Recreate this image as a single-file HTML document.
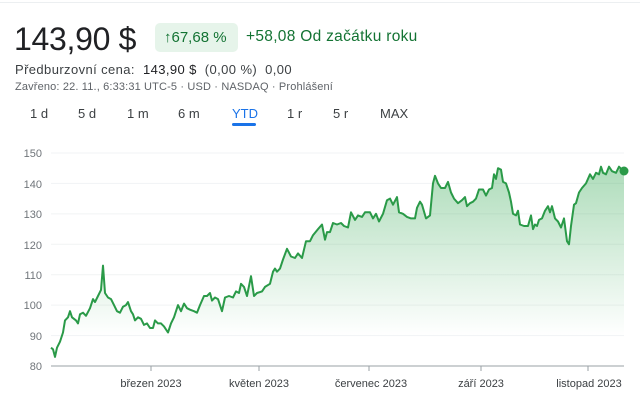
<!DOCTYPE html>
<html><head><meta charset="utf-8"><style>
body{margin:0;width:640px;height:401px;background:#fff;font-family:"Liberation Sans",Arial,sans-serif;position:relative;overflow:hidden}
.a{position:absolute;white-space:nowrap}
</style></head><body>
<div class="a" style="left:0;top:2px;width:640px;height:1px;background:#eceff1"></div>
<div class="a" style="left:14px;top:21px;font-size:32px;color:#202124;letter-spacing:-0.3px">143,90 $</div>
<div class="a" style="left:155px;top:23px;width:83px;height:29px;background:#e6f4ea;border-radius:5px"></div>
<div class="a" style="left:164px;top:29px;font-size:15px;color:#137333">↑67,68 %</div>
<div class="a" style="left:246px;top:28px;font-size:15.5px;color:#137333;letter-spacing:0.3px">+58,08 Od začátku roku</div>
<div class="a" style="left:15px;top:62px;font-size:13px;color:#3c4043;letter-spacing:0.4px">Předburzovní cena:&nbsp; <span style="color:#202124">143,90 $</span>&nbsp; (0,00 %)&nbsp; 0,00</div>
<div class="a" style="left:15px;top:81px;font-size:11px;color:#5f6368;letter-spacing:0.15px">Zavřeno: 22. 11., 6:33:31 UTC-5 · USD · NASDAQ · Prohlášení</div>
<div class="a" style="top:106px;font-size:13px;color:#3c4043;left:0;width:640px">
<span class="a" style="left:30px">1 d</span><span class="a" style="left:78px">5 d</span><span class="a" style="left:127px">1 m</span><span class="a" style="left:178px">6 m</span><span class="a" style="left:232px;color:#1a73e8">YTD</span><span class="a" style="left:287px">1 r</span><span class="a" style="left:333px">5 r</span><span class="a" style="left:380px">MAX</span></div>
<div class="a" style="left:232px;top:123px;width:24px;height:3px;background:#1a73e8;border-radius:2px"></div>
<svg class="a" style="left:0;top:0" width="640" height="401" id="s">
<defs><linearGradient id="g" x1="0" y1="0" x2="0" y2="1"><stop offset="0" stop-color="#34a853" stop-opacity="0.4"/><stop offset="0.85" stop-color="#34a853" stop-opacity="0"/></linearGradient></defs>
<g font-size="11" fill="#70757a" text-anchor="end">
<text x="42" y="157">150</text><text x="42" y="188">140</text><text x="42" y="218">130</text><text x="42" y="249">120</text><text x="42" y="279">110</text><text x="42" y="309">100</text><text x="42" y="340">90</text><text x="42" y="370">80</text></g>
<g stroke="#f1f3f4" stroke-width="1">
<line x1="51" x2="624" y1="153" y2="153"/><line x1="51" x2="624" y1="183.4" y2="183.4"/><line x1="51" x2="624" y1="213.9" y2="213.9"/><line x1="51" x2="624" y1="244.3" y2="244.3"/><line x1="51" x2="624" y1="274.7" y2="274.7"/><line x1="51" x2="624" y1="305.1" y2="305.1"/><line x1="51" x2="624" y1="335.6" y2="335.6"/></g>
<line x1="51" x2="624" y1="366" y2="366" stroke="#9aa0a6"/>
<g stroke="#9aa0a6"><line x1="151" x2="151" y1="366" y2="371"/><line x1="259" x2="259" y1="366" y2="371"/><line x1="369" x2="369" y1="366" y2="371"/><line x1="481" x2="481" y1="366" y2="371"/><line x1="588" x2="588" y1="366" y2="371"/></g>
<g font-size="11" fill="#3c4043" text-anchor="middle">
<text x="151" y="387">březen 2023</text><text x="259" y="387">květen 2023</text><text x="371" y="387">červenec 2023</text><text x="481" y="387">září 2023</text><text x="589" y="387">listopad 2023</text></g>
<path id="f" fill="url(#g)"/><path id="l" fill="none" stroke="#2a9a48" stroke-width="2" stroke-linejoin="round"/>
<circle cx="624" cy="171" r="4.5" fill="#2a9a48"/>
</svg>
<script>
var d=[51,86,53,85.5,55,83,57,86,60,88,63,91,65,95,68,96,70,98,72,96,76,95,78,94,80,97,83,97.5,86,96.5,90,99,93,102,95,101,98,103,101,105,103,113,105,104,108,102.5,111,102,114,100,117,98,120,97.5,123,99.5,126,100,128,101,131,98,133,97,135,95,138,96,141,95.5,144,93.5,147,94,150,92.5,153,92.5,155,95,158,94,161,94,164,93,168,91,171,94,174,96,178,100,181,98,184,100.5,187,99,190,98.5,194,98,197,97.5,200,100,204,103,207,103,210,104,212,101.5,215,102.5,218,102,222,98,225,102.5,229,103,233,102.5,236,104.5,239,104,241,107,244,106,247,103,251,109.5,254,103,257,104,262,104.5,265,106,270,107,273,111,275,112,277,111,280,112,283,115,287,118.5,291,116,295,115.5,298,117,302,115.5,306,121,310,121,313,123,318,125,322,126.5,325,121.5,327,124,330,124,333,127,337,126.5,341,127,344,126,348,125.5,351,130.5,355,128,358,129.5,362,129,365,130.5,370,130.5,373,128.5,376,130,379,127.5,383,130,387,134.5,390,135,393,133,397,135.5,399,130.5,403,130,407,129,411,128.5,415,128.5,417,132,420,134,422,133,426,128.5,430,129.5,433,140,435,142.5,438,140,441,138.5,445,138.5,448,140.5,451,137,454,135,458,133.5,462,134.5,465,135.5,467,132.5,470,133.5,473,134,476,135,479,138,483,138,486,136,489,138,492,138.5,494,143,496,141.5,498,145,501,144.5,503,140.5,506,140,509,137,511,134,513,130,516,129.5,518,131,520,126.5,524,126,528,126,531,129.5,533,125,535,126.5,537,126,539,128,542,128.5,545,131,548,132.5,550,130.5,552,132.5,555,128.5,558,127.5,561,125.5,564,128.5,567,121,569,120,571,126,574,133,576,133.5,579,137,582,138.5,586,140,590,143,593,141.5,596,143.5,599,143,601,145.5,603,143.5,606,143,609,145.5,612,144,616,143.5,619,145.5,622,144.5,624,144];
var p="";for(var i=0;i<d.length;i+=2){p+=(i?"L":"M")+d[i]+" "+(366-(d[i+1]-80)*3.043).toFixed(1);}
document.getElementById("l").setAttribute("d",p);
document.getElementById("f").setAttribute("d",p+"L624 366L51 366Z");
</script>
</body></html>
